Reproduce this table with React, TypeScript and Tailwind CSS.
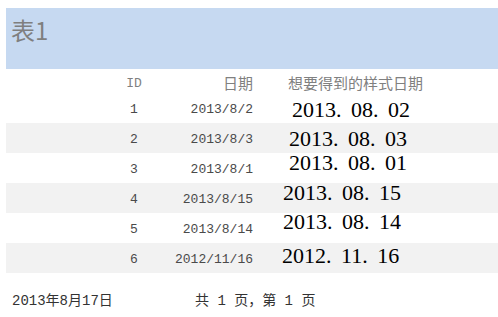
const rows = [
  { id: "1", date: "2013/8/2", fmt: "2013. 08. 02", big: "ml-[39px] mt-[3px]" },
  { id: "2", date: "2013/8/3", fmt: "2013. 08. 03", big: "ml-[36px] mt-[1px]" },
  { id: "3", date: "2013/8/1", fmt: "2013. 08. 01", big: "ml-[36px] mb-[10px]" },
  { id: "4", date: "2013/8/15", fmt: "2013. 08. 15", big: "ml-[30px] mb-[10px]" },
  { id: "5", date: "2013/8/14", fmt: "2013. 08. 14", big: "ml-[30px] mb-[12px]" },
  { id: "6", date: "2012/11/16", fmt: "2012. 11. 16", big: "ml-[29px] mb-[4px]" },
];

const mono = "font-['Liberation_Mono','Noto_Sans_CJK_SC',monospace]";
const cjk = "font-['Noto_Sans_CJK_SC',sans-serif]";

export default function App() {
  return (
    <div className="w-[498px] h-[317px] bg-white overflow-hidden">
      <div className="ml-[6px] mt-[8px] h-[61px] bg-[#c6d9f1] pl-[5px] pt-[5px]">
        <span className={`${cjk} text-[24px] leading-[34px] text-[#7f7f7f]`}>表1</span>
      </div>

      <div className={`ml-[6px] h-[24px] flex items-center pt-[5px] text-[15px] text-[#808080] ${cjk}`}>
        <div className="w-[108px]" />
        <div className={`w-[40px] text-center ${mono} text-[13px]`}>ID</div>
        <div className="w-[99px] text-right">日期</div>
        <div className="ml-[35px]">想要得到的样式日期</div>
      </div>

      {rows.map((r, i) => (
        <div
          key={r.id}
          className={`ml-[6px] h-[30px] flex items-center ${i % 2 === 1 ? "bg-[#f2f2f2]" : ""}`}
        >
          <div className="w-[108px]" />
          <div className={`w-[40px] text-center ${mono} text-[13px] text-[#4a4a4a] pt-[3px]`}>{r.id}</div>
          <div className={`w-[99px] text-right ${mono} text-[13px] text-[#4a4a4a] pt-[3px]`}>{r.date}</div>
          <div
            className={`${r.big} font-['Liberation_Serif',serif] text-[22px] leading-none text-black whitespace-pre [word-spacing:4px]`}
          >
            {r.fmt}
          </div>
        </div>
      ))}

      <div className={`flex items-center mt-[18px] text-[14px] text-[#333333] ${mono}`}>
        <div className="w-[195px] pl-[12px]">2013年8月17日</div>
        <div className="whitespace-pre">共 1 页，第 1 页</div>
      </div>
    </div>
  );
}
